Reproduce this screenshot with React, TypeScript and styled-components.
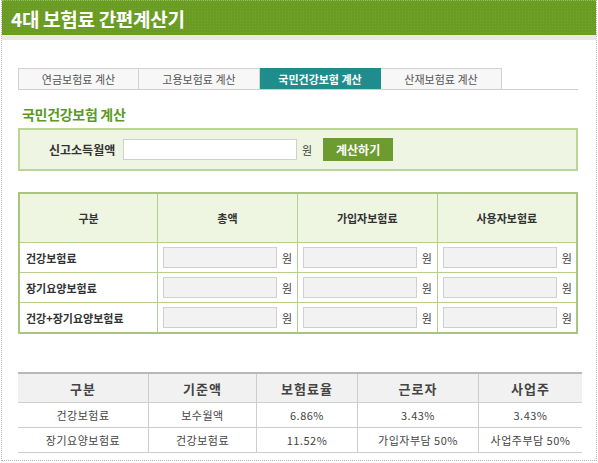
import styled, { createGlobalStyle } from 'styled-components';

const GlobalStyle = createGlobalStyle`
  html, body {
    margin: 0;
    padding: 0;
    background: #ffffff;
  }
  body {
    font-family: 'Noto Sans CJK KR', 'Noto Sans', sans-serif;
    color: #333;
  }
`;

const Frame = styled.div`
  box-sizing: border-box;
  width: 596px;
  height: 461px;
  margin-left: 1px;
  border: 1px dotted #b4b4b4;
  border-top: none;
  overflow: hidden;
`;

const Header = styled.div`
  height: 35px;
  display: flex;
  align-items: center;
  padding-left: 9px;
  background-color: #6a9c24;
  background-image: radial-gradient(rgba(255, 255, 255, 0.08) 1px, transparent 1px);
  background-size: 3px 3px;
  border-top: 1px dotted #9bbf66;
  box-sizing: border-box;
`;

const Title = styled.h1`
  margin: 0;
  font-size: 19px;
  font-weight: 700;
  color: #ffffff;
  letter-spacing: -0.3px;
`;

const Strip = styled.div`
  height: 5px;
  background: #e9e9e1;
`;

const Content = styled.div`
  padding: 28px 0 0 16px;
  width: 560px;
`;

const Tabs = styled.div`
  display: flex;
  height: 22px;
  border-bottom: 1px solid #cfcfcf;
  box-sizing: border-box;
`;

const Tab = styled.div<{ $active?: boolean }>`
  box-sizing: border-box;
  width: 121px;
  height: 21px;
  display: flex;
  align-items: center;
  justify-content: center;
  font-size: 11px;
  font-weight: ${(p) => (p.$active ? 700 : 400)};
  color: ${(p) => (p.$active ? '#ffffff' : '#555')};
  background: ${(p) => (p.$active ? '#1f8d8b' : '#f7f7f7')};
  border: 1px solid ${(p) => (p.$active ? '#1f8d8b' : '#d2d2d2')};
  border-bottom: none;
  & + & {
    border-left: none;
  }
`;

const SectionTitle = styled.h2`
  margin: 14px 0 0 4px;
  height: 20px;
  font-size: 14px;
  font-weight: 700;
  color: #5b9a1e;
  letter-spacing: -0.3px;
`;

const SearchBox = styled.div`
  box-sizing: border-box;
  margin-top: 4px;
  height: 43px;
  display: flex;
  align-items: center;
  padding-left: 29px;
  background: #eef5e2;
  border: 2px solid #bad595;
`;

const Label = styled.span`
  font-size: 12px;
  font-weight: 700;
  color: #333;
  width: 74px;
`;

const TextInput = styled.input<{ $w: number; $filled?: boolean }>`
  box-sizing: border-box;
  width: ${(p) => p.$w}px;
  height: 21px;
  border: 1px solid #cfcfcf;
  background: ${(p) => (p.$filled ? '#f2f2f2' : '#ffffff')};
  padding: 0 4px;
  font-size: 12px;
  outline: none;
`;

const Unit = styled.span`
  font-size: 11px;
  color: #444;
  margin-left: 5px;
`;

const CalcButton = styled.button`
  margin-left: 11px;
  height: 23px;
  width: 70px;
  border: none;
  background: #6c9b2e;
  color: #ffffff;
  font-family: inherit;
  font-size: 12px;
  font-weight: 700;
  padding: 0;
`;

const CalcTable = styled.table`
  margin-top: 21px;
  width: 560px;
  border-collapse: collapse;
  border: 2px solid #a9c580;
  table-layout: fixed;
`;

const CalcHead = styled.th<{ $w?: number }>`
  width: ${(p) => (p.$w ? `${p.$w}px` : 'auto')};
  height: 48px;
  background: #eef6e2;
  border: 1px solid #b6cf90;
  font-size: 11px;
  font-weight: 700;
  color: #333;
  text-align: center;
  padding: 0;
`;

const RowLabel = styled.td`
  height: 29px;
  border: 1px solid #b6cf90;
  font-size: 11px;
  font-weight: 700;
  color: #333;
  padding: 0 0 0 6px;
`;

const AmountCell = styled.td`
  border: 1px solid #b6cf90;
  padding: 0 0 0 5px;
  white-space: nowrap;
`;

const AmountWrap = styled.div`
  display: flex;
  align-items: center;
`;

const RateTable = styled.table`
  margin-top: 38px;
  width: 560px;
  border-collapse: collapse;
  border-top: 2px solid #b8b8b8;
  table-layout: fixed;
`;

const RateHead = styled.th<{ $w: number }>`
  width: ${(p) => p.$w}px;
  height: 28px;
  background: #f1f1f1;
  border-bottom: 1px solid #cdcdcd;
  border-left: 1px solid #cdcdcd;
  &:first-child {
    border-left: none;
  }
  font-size: 13px;
  font-weight: 700;
  color: #444;
  text-align: center;
  padding: 0;
  letter-spacing: 1px;
`;

const RateCell = styled.td`
  height: 24px;
  border-bottom: 1px solid #cdcdcd;
  border-left: 1px solid #cdcdcd;
  &:first-child {
    border-left: none;
  }
  font-size: 11px;
  color: #444;
  text-align: center;
  padding: 0;
  letter-spacing: 0.5px;
`;

const calcRows = ['건강보험료', '장기요양보험료', '건강+장기요양보험료'];

const rateCols = [
  { label: '구분', w: 130 },
  { label: '기준액', w: 107 },
  { label: '보험료율', w: 100 },
  { label: '근로자', w: 120 },
  { label: '사업주', w: 103 },
];

const rateRows = [
  ['건강보험료', '보수월액', '6.86%', '3.43%', '3.43%'],
  ['장기요양보험료', '건강보험료', '11.52%', '가입자부담 50%', '사업주부담 50%'],
];

export default function App() {
  return (
    <>
      <GlobalStyle />
      <Frame>
        <Header>
          <Title>4대 보험료 간편계산기</Title>
        </Header>
        <Strip />
        <Content>
          <Tabs>
            <Tab>연금보험료 계산</Tab>
            <Tab>고용보험료 계산</Tab>
            <Tab $active>국민건강보험 계산</Tab>
            <Tab>산재보험료 계산</Tab>
          </Tabs>
          <SectionTitle>국민건강보험 계산</SectionTitle>
          <SearchBox>
            <Label>신고소득월액</Label>
            <TextInput $w={174} />
            <Unit>원</Unit>
            <CalcButton>계산하기</CalcButton>
          </SearchBox>
          <CalcTable>
            <thead>
              <tr>
                <CalcHead $w={137}>구분</CalcHead>
                <CalcHead>총액</CalcHead>
                <CalcHead>가입자보험료</CalcHead>
                <CalcHead>사용자보험료</CalcHead>
              </tr>
            </thead>
            <tbody>
              {calcRows.map((row) => (
                <tr key={row}>
                  <RowLabel>{row}</RowLabel>
                  {[0, 1, 2].map((i) => (
                    <AmountCell key={i}>
                      <AmountWrap>
                        <TextInput $w={114} $filled readOnly />
                        <Unit>원</Unit>
                      </AmountWrap>
                    </AmountCell>
                  ))}
                </tr>
              ))}
            </tbody>
          </CalcTable>
          <RateTable>
            <thead>
              <tr>
                {rateCols.map((c) => (
                  <RateHead key={c.label} $w={c.w}>
                    {c.label}
                  </RateHead>
                ))}
              </tr>
            </thead>
            <tbody>
              {rateRows.map((r) => (
                <tr key={r[0]}>
                  {r.map((v, i) => (
                    <RateCell key={i}>{v}</RateCell>
                  ))}
                </tr>
              ))}
            </tbody>
          </RateTable>
        </Content>
      </Frame>
    </>
  );
}
